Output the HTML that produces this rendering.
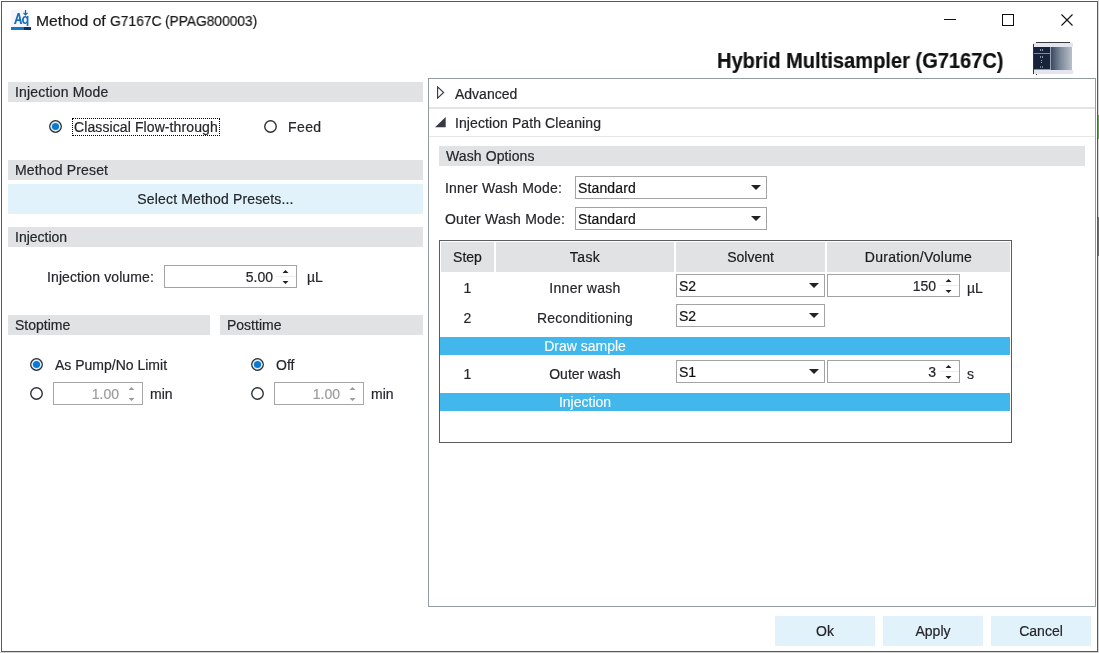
<!DOCTYPE html>
<html><head><meta charset="utf-8">
<style>
*{box-sizing:border-box;margin:0;padding:0}
html,body{width:1099px;height:653px;overflow:hidden;background:#fff}
body{position:relative;font-family:"Liberation Sans",sans-serif;font-size:14px;color:#24262b}
.a{position:absolute}
.t{position:absolute;white-space:pre;line-height:16px;height:16px;will-change:transform;-webkit-text-stroke:0.2px currentColor}
.bar{position:absolute;background:#e1e2e4;height:20px}
.btn{position:absolute;background:#e2f2fb}
.box{position:absolute;border:1px solid #a3a3a3;background:#fff}
.rad{position:absolute;width:13px;height:13px;border-radius:50%;border:1.5px solid #333;background:#fff}
.rad.on::after{content:"";position:absolute;left:1.5px;top:1.5px;width:7px;height:7px;border-radius:50%;background:#0a78d2}
.c{text-align:center}
.r{text-align:right}
.hdr{position:absolute;background:#e1e2e4;top:242px;height:30px}
.band{position:absolute;left:440px;width:570px;height:18px;background:#41b7ec}
.wt{color:#fff;-webkit-text-stroke:0.1px #fff}
</style></head><body>

<!-- outside -->
<div class="a" style="left:0;top:652px;width:1099px;height:1px;background:#d4d4d4"></div>
<div class="a" style="left:1098px;top:0;width:1px;height:653px;background:#d8d8d8"></div>
<div class="a" style="left:1098px;top:115px;width:1px;height:24px;background:#6aa84f"></div>
<div class="a" style="left:1098px;top:217px;width:1px;height:39px;background:#707070"></div>
<!-- window border -->
<div class="a" style="left:1px;top:1px;width:1097px;height:651px;border:1px solid #595959"></div>

<!-- app icon -->
<svg class="a" style="left:10px;top:8px" width="22" height="23" viewBox="0 0 22 23">
  <rect x="1" y="2" width="19" height="17" fill="#f3f7fb"/>
  <path d="M4 16 L7.6 5 L9.6 5 L12.2 16 L10.2 16 L9.5 13 L6.9 13 L6 16 Z M7.4 11.3 L9.1 11.3 L8.6 7.5 Z" fill="#1b6dbb"/>
  <path transform="translate(-0.8,0)" d="M16.2 8 C13.8 8 12.8 9.8 12.8 12 C12.8 14.2 13.8 16 15.8 16 C16.6 16 17.2 15.6 17.5 15.1 L17.5 18 L19.2 18 L19.2 8.1 L17.6 8.1 L17.5 8.9 C17.2 8.3 16.8 8 16.2 8 Z M16.1 9.6 C17.1 9.6 17.5 10.6 17.5 12 C17.5 13.4 17.1 14.4 16.1 14.4 C15.1 14.4 14.6 13.4 14.6 12 C14.6 10.6 15.1 9.6 16.1 9.6 Z" fill="#1b6dbb"/>
  <path transform="translate(-1.8,0)" d="M17.3 2 V6.5" stroke="#1e5f9e" stroke-width="1.2"/>
  <path transform="translate(-1.8,0)" d="M15.3 4.8 L17.3 6.8 L19.3 4.8" stroke="#1e5f9e" stroke-width="1.2" fill="none"/>
  <rect x="1" y="19" width="13" height="3" fill="#1675c6"/>
  <rect x="14" y="19" width="7" height="3" fill="#0b2f66"/>
</svg>

<div class="t" style="left:35.8px;top:13px;font-size:14.5px;color:#1a1a1a;transform:scaleX(1.081);transform-origin:0 0">Method of</div>
<div class="t" style="left:110.2px;top:13px;font-size:14.5px;color:#1a1a1a;transform:scaleX(0.954);transform-origin:0 0">G7167C</div>
<div class="t" style="left:165px;top:13px;font-size:14.5px;color:#1a1a1a;transform:scaleX(0.948);transform-origin:0 0">(PPAG800003)</div>

<!-- title buttons -->
<div class="a" style="left:944px;top:19px;width:12px;height:1px;background:#111"></div>
<div class="a" style="left:1002px;top:14px;width:12px;height:12px;border:1px solid #111"></div>
<svg class="a" style="left:1061px;top:14px" width="12" height="12" viewBox="0 0 12 12"><path d="M0.5 0.5 L11.5 11.5 M11.5 0.5 L0.5 11.5" stroke="#111" stroke-width="1.1"/></svg>

<div class="t" style="left:717px;top:48px;font-size:22px;font-weight:700;color:#111;line-height:26px;height:26px;transform:scaleX(0.912);transform-origin:0 0">Hybrid Multisampler (G7167C)</div>

<!-- instrument image -->
<svg class="a" style="left:1032px;top:41px" width="42" height="35" viewBox="0 0 42 35">
  <defs><linearGradient id="ig" x1="0" x2="1" y1="0" y2="0"><stop offset="0" stop-color="#3a4860"/><stop offset="0.45" stop-color="#7d8899"/><stop offset="1" stop-color="#b9c0c9"/></linearGradient></defs>
  <rect x="4" y="1" width="34" height="1" fill="#3a3a3a"/>
  <rect x="1" y="2" width="40" height="4" fill="#e3e6ef"/>
  <rect x="2" y="6" width="16" height="23" fill="#16233a"/>
  <rect x="2" y="12" width="16" height="1" fill="#7c8aa0"/>
  <rect x="2" y="28" width="16" height="1" fill="#8b97aa"/>
  <rect x="18" y="6" width="1" height="23" fill="#9aa4b4"/>
  <rect x="19" y="6" width="21" height="23" fill="url(#ig)"/>
  <rect x="1" y="29" width="40" height="4" fill="#e3e6ef"/>
  <rect x="1" y="3" width="1" height="30" fill="#333"/>
  <rect x="4" y="33" width="1" height="1" fill="#333"/>
  <rect x="8" y="8" width="1" height="2" fill="#8d97a8"/><rect x="10" y="8" width="1" height="2" fill="#8d97a8"/>
  <rect x="8" y="15" width="1" height="2" fill="#8d97a8"/><rect x="10" y="15" width="1" height="2" fill="#8d97a8"/>
  <rect x="9" y="19" width="1" height="1" fill="#a9b2c0"/><rect x="9" y="21" width="1" height="1" fill="#a9b2c0"/>
  <rect x="8" y="25" width="1" height="2" fill="#6f7b8e"/><rect x="10" y="25" width="1" height="2" fill="#6f7b8e"/>
</svg>

<!-- LEFT PANEL -->
<div class="bar" style="left:8px;top:82px;width:415px"></div>
<div class="t" style="letter-spacing:0.17px;left:15px;top:84px">Injection Mode</div>
<svg class="a" style="left:48px;top:119px" width="15" height="15" viewBox="0 0 15 15"><circle cx="7.5" cy="7.5" r="5.75" fill="#fff" stroke="#2d323a" stroke-width="1.4"/><circle cx="7.5" cy="7.5" r="3.6" fill="#0a78d4"/><circle cx="7.5" cy="7.5" r="4.4" fill="none" stroke="#bfe6fb" stroke-width="0.8"/></svg>
<div class="a" style="left:72px;top:118px;width:148px;height:18px;border:1px dotted #000"></div>
<div class="t" style="letter-spacing:0.1px;left:74px;top:119px">Classical Flow-through</div>
<svg class="a" style="left:263px;top:119px" width="15" height="15" viewBox="0 0 15 15"><circle cx="7.5" cy="7.5" r="5.75" fill="#fff" stroke="#2d323a" stroke-width="1.4"/></svg>
<div class="t" style="letter-spacing:0.4px;left:288px;top:119px">Feed</div>

<div class="bar" style="left:8px;top:160px;width:415px"></div>
<div class="t" style="letter-spacing:0.16px;left:15px;top:162px">Method Preset</div>
<div class="btn" style="left:8px;top:184px;width:415px;height:30px"></div>
<div class="t c" style="letter-spacing:0.16px;left:8px;top:191px;width:415px">Select Method Presets...</div>

<div class="bar" style="left:8px;top:227px;width:415px"></div>
<div class="t" style="left:15px;top:229px">Injection</div>
<div class="t" style="letter-spacing:0.11px;left:47px;top:269px">Injection volume:</div>
<div class="box" style="left:164px;top:265px;width:133px;height:23px"></div>
<div class="t r" style="left:164px;top:269px;width:109px">5.00</div>
<svg class="a" style="left:282px;top:270px" width="8" height="14" viewBox="0 0 8 14"><path d="M0.5 3 L3.5 0 L6.5 3 Z M0.5 11 L3.5 14 L6.5 11 Z" fill="#222"/></svg>
<div class="t" style="left:307px;top:269px">µL</div>

<div class="bar" style="left:8px;top:315px;width:202px"></div>
<div class="t" style="left:15px;top:317px">Stoptime</div>
<div class="bar" style="left:220px;top:315px;width:203px"></div>
<div class="t" style="left:227px;top:317px">Posttime</div>

<svg class="a" style="left:29px;top:357px" width="15" height="15" viewBox="0 0 15 15"><circle cx="7.5" cy="7.5" r="5.75" fill="#fff" stroke="#2d323a" stroke-width="1.4"/><circle cx="7.5" cy="7.5" r="3.6" fill="#0a78d4"/><circle cx="7.5" cy="7.5" r="4.4" fill="none" stroke="#bfe6fb" stroke-width="0.8"/></svg>
<div class="t" style="left:55px;top:357px">As Pump/No Limit</div>
<svg class="a" style="left:29px;top:386px" width="15" height="15" viewBox="0 0 15 15"><circle cx="7.5" cy="7.5" r="5.75" fill="#fff" stroke="#2d323a" stroke-width="1.4"/></svg>
<div class="box" style="left:53px;top:382px;width:90px;height:23px;border-color:#a6a6a6"></div>
<div class="t r" style="left:53px;top:386px;width:66px;color:#9c9c9c">1.00</div>
<svg class="a" style="left:128px;top:387px" width="8" height="14" viewBox="0 0 8 14"><path d="M0.5 3 L3.5 0 L6.5 3 Z M0.5 11 L3.5 14 L6.5 11 Z" fill="#9c9c9c"/></svg>
<div class="t" style="left:150px;top:386px">min</div>

<svg class="a" style="left:250px;top:357px" width="15" height="15" viewBox="0 0 15 15"><circle cx="7.5" cy="7.5" r="5.75" fill="#fff" stroke="#2d323a" stroke-width="1.4"/><circle cx="7.5" cy="7.5" r="3.6" fill="#0a78d4"/><circle cx="7.5" cy="7.5" r="4.4" fill="none" stroke="#bfe6fb" stroke-width="0.8"/></svg>
<div class="t" style="left:276px;top:357px">Off</div>
<svg class="a" style="left:250px;top:386px" width="15" height="15" viewBox="0 0 15 15"><circle cx="7.5" cy="7.5" r="5.75" fill="#fff" stroke="#2d323a" stroke-width="1.4"/></svg>
<div class="box" style="left:274px;top:382px;width:90px;height:23px;border-color:#a6a6a6"></div>
<div class="t r" style="left:274px;top:386px;width:66px;color:#9c9c9c">1.00</div>
<svg class="a" style="left:349px;top:387px" width="8" height="14" viewBox="0 0 8 14"><path d="M0.5 3 L3.5 0 L6.5 3 Z M0.5 11 L3.5 14 L6.5 11 Z" fill="#9c9c9c"/></svg>
<div class="t" style="left:371px;top:386px">min</div>

<!-- RIGHT PANEL -->
<div class="a" style="left:428px;top:78px;width:668px;height:529px;border:1px solid #939d9d"></div>
<svg class="a" style="left:436px;top:86px" width="9" height="13" viewBox="0 0 9 13"><path d="M1.6 0.9 L7.6 6.5 L1.6 12.1 Z" fill="none" stroke="#353a44" stroke-width="1.15"/></svg>
<div class="t" style="left:455px;top:86px">Advanced</div>
<div class="a" style="left:429px;top:107px;width:666px;height:2px;background:#e3e3e3"></div>
<svg class="a" style="left:435px;top:116px" width="12" height="12" viewBox="0 0 12 12"><path d="M10.7 0.9 L10.7 11.2 L0 11.2 Z" fill="#353a44"/></svg>
<div class="t" style="letter-spacing:0.09px;left:455px;top:115px">Injection Path Cleaning</div>
<div class="a" style="left:429px;top:136px;width:666px;height:1px;background:#e6e6e6"></div>

<div class="bar" style="left:439px;top:146px;width:646px"></div>
<div class="t" style="letter-spacing:0.1px;left:446px;top:148px">Wash Options</div>

<div class="t" style="letter-spacing:0.2px;left:445px;top:180px">Inner Wash Mode:</div>
<div class="box" style="left:575px;top:176px;width:192px;height:23px"></div>
<div class="t" style="letter-spacing:0.13px;left:578px;top:180px;color:#111">Standard</div>
<svg class="a" style="left:751px;top:185px" width="10" height="5" viewBox="0 0 10 5"><path d="M0 0 L10 0 L5 5 Z" fill="#222"/></svg>
<div class="t" style="letter-spacing:0.19px;left:445px;top:211px">Outer Wash Mode:</div>
<div class="box" style="left:575px;top:207px;width:192px;height:23px"></div>
<div class="t" style="letter-spacing:0.13px;left:578px;top:211px;color:#111">Standard</div>
<svg class="a" style="left:751px;top:216px" width="10" height="5" viewBox="0 0 10 5"><path d="M0 0 L10 0 L5 5 Z" fill="#222"/></svg>

<!-- TABLE -->
<div class="a" style="left:439px;top:240px;width:573px;height:203px;border:1px solid #5c5c5c"></div>
<div class="hdr" style="left:441px;width:53px"></div>
<div class="hdr" style="left:496px;width:178px"></div>
<div class="hdr" style="left:676px;width:149px"></div>
<div class="hdr" style="left:827px;width:183px"></div>
<div class="t c" style="left:441px;top:249px;width:53px;color:#1a1a1a">Step</div>
<div class="t c" style="letter-spacing:0.4px;left:496px;top:249px;width:178px;color:#1a1a1a">Task</div>
<div class="t c" style="left:676px;top:249px;width:149px;color:#1a1a1a">Solvent</div>
<div class="t c" style="letter-spacing:0.25px;left:827px;top:249px;width:183px;color:#1a1a1a">Duration/Volume</div>

<!-- row1 -->
<div class="t c" style="left:441px;top:280px;width:53px">1</div>
<div class="t c" style="letter-spacing:0.28px;left:496px;top:280px;width:178px">Inner wash</div>
<div class="box" style="left:676px;top:274px;width:149px;height:23px"></div>
<div class="t" style="left:679px;top:278px;color:#111">S2</div>
<svg class="a" style="left:809px;top:283px" width="10" height="5" viewBox="0 0 10 5"><path d="M0 0 L10 0 L5 5 Z" fill="#222"/></svg>
<div class="box" style="left:827px;top:274px;width:133px;height:23px"></div>
<div class="t r" style="left:827px;top:278px;width:109px">150</div>
<svg class="a" style="left:945px;top:279px" width="8" height="14" viewBox="0 0 8 14"><path d="M0.5 3 L3.5 0 L6.5 3 Z M0.5 11 L3.5 14 L6.5 11 Z" fill="#222"/></svg>
<div class="t" style="left:967px;top:280px">µL</div>

<!-- row2 -->
<div class="t c" style="left:441px;top:310px;width:53px">2</div>
<div class="t c" style="letter-spacing:0.25px;left:496px;top:310px;width:178px">Reconditioning</div>
<div class="box" style="left:676px;top:304px;width:149px;height:23px"></div>
<div class="t" style="left:679px;top:308px;color:#111">S2</div>
<svg class="a" style="left:809px;top:313px" width="10" height="5" viewBox="0 0 10 5"><path d="M0 0 L10 0 L5 5 Z" fill="#222"/></svg>

<div class="band" style="top:337px"></div>
<div class="t c wt" style="left:496px;top:338px;width:178px">Draw sample</div>

<!-- row3 -->
<div class="t c" style="left:441px;top:366px;width:53px">1</div>
<div class="t c" style="left:496px;top:366px;width:178px">Outer wash</div>
<div class="box" style="left:676px;top:360px;width:149px;height:23px"></div>
<div class="t" style="left:679px;top:364px;color:#111">S1</div>
<svg class="a" style="left:809px;top:369px" width="10" height="5" viewBox="0 0 10 5"><path d="M0 0 L10 0 L5 5 Z" fill="#222"/></svg>
<div class="box" style="left:827px;top:360px;width:133px;height:23px"></div>
<div class="t r" style="left:827px;top:364px;width:109px">3</div>
<svg class="a" style="left:945px;top:365px" width="8" height="14" viewBox="0 0 8 14"><path d="M0.5 3 L3.5 0 L6.5 3 Z M0.5 11 L3.5 14 L6.5 11 Z" fill="#222"/></svg>
<div class="t" style="left:967px;top:366px">s</div>

<div class="band" style="top:393px"></div>
<div class="t c wt" style="left:496px;top:394px;width:178px">Injection</div>

<div class="a" style="left:276px;top:276px;width:20px;height:1px;background:#ececec"></div>
<div class="a" style="left:939px;top:285px;width:20px;height:1px;background:#ececec"></div>
<div class="a" style="left:939px;top:371px;width:20px;height:1px;background:#ececec"></div>
<!-- BUTTONS -->
<div class="btn" style="left:775px;top:616px;width:100px;height:30px"></div>
<div class="t c" style="left:775px;top:623px;width:100px">Ok</div>
<div class="btn" style="left:883px;top:616px;width:100px;height:30px"></div>
<div class="t c" style="left:883px;top:623px;width:100px">Apply</div>
<div class="btn" style="left:991px;top:616px;width:100px;height:30px"></div>
<div class="t c" style="left:991px;top:623px;width:100px">Cancel</div>

</body></html>
